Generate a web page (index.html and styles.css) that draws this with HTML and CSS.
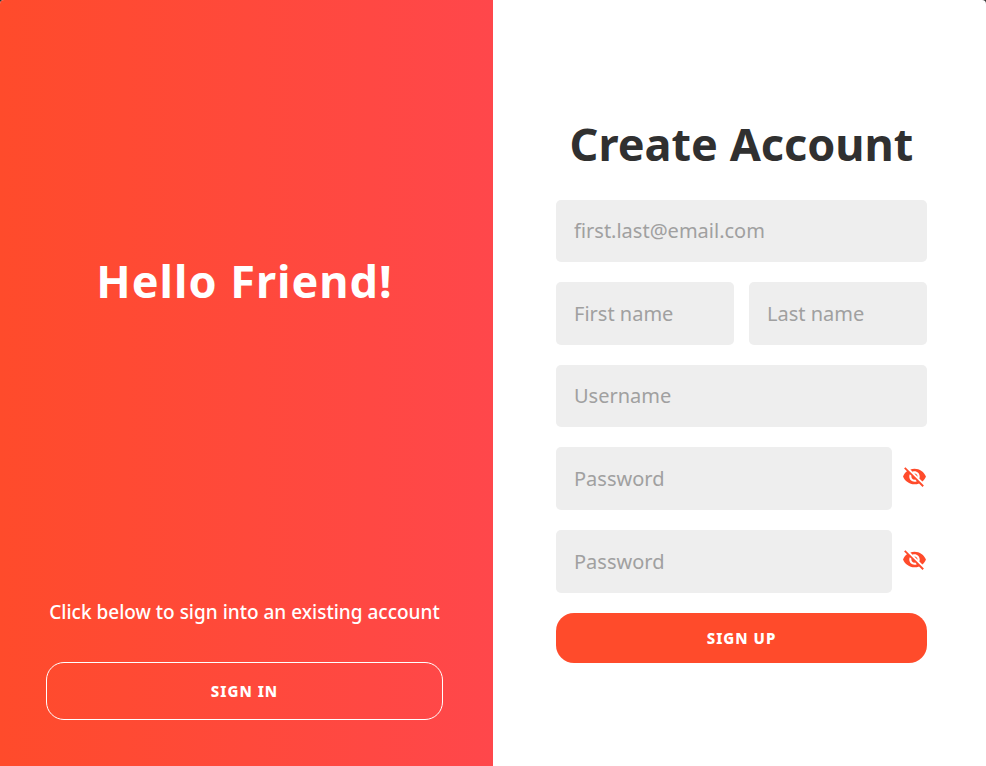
FILE: index.html
```html
<!DOCTYPE html>
<html lang="en">
<head>
<meta charset="utf-8">
<title>Create Account</title>
<link rel="stylesheet" href="styles.css">
</head>
<body>
<main class="card">
  <section class="welcome">
    <h1 class="title greeting">Hello Friend!</h1>
    <div class="signin">
      <p class="hint">Click below to sign into an existing account</p>
      <button class="button ghost" type="button">SIGN IN</button>
    </div>
  </section>
  <section class="register">
    <form class="form">
      <h1 class="title">Create Account</h1>
      <input class="field" type="email" aria-label="Email" placeholder="first.last@email.com">
      <div class="names">
        <input class="field" type="text" aria-label="First name" placeholder="First name">
        <input class="field" type="text" aria-label="Last name" placeholder="Last name">
      </div>
      <input class="field" type="text" aria-label="Username" placeholder="Username">
      <div class="secret">
        <input class="field" type="password" aria-label="Password" placeholder="Password">
        <button class="reveal" type="button" aria-label="Show password"><svg class="eye" viewBox="0 0 24 24"><path d="M12 7c2.76 0 5 2.24 5 5 0 .65-.13 1.26-.36 1.83l2.92 2.92c1.51-1.26 2.7-2.89 3.43-4.75-1.73-4.39-6-7.5-11-7.5-1.4 0-2.74.25-3.98.7l2.16 2.16C10.74 7.13 11.35 7 12 7zM2 4.27l2.28 2.28.46.46C3.08 8.3 1.78 10.02 1 12c1.73 4.39 6 7.5 11 7.5 1.55 0 3.03-.3 4.38-.84l.42.42L19.73 22 21 20.73 3.27 3 2 4.27zM7.53 9.8l1.55 1.55c-.05.21-.08.43-.08.65 0 1.66 1.34 3 3 3 .22 0 .44-.03.65-.08l1.55 1.55c-.67.33-1.41.53-2.2.53-2.76 0-5-2.24-5-5 0-.79.2-1.53.53-2.2zm4.31-.78l3.15 3.15.02-.16c0-1.66-1.34-3-3-3l-.17.01z"/></svg></button>
      </div>
      <div class="secret">
        <input class="field" type="password" aria-label="Confirm password" placeholder="Password">
        <button class="reveal" type="button" aria-label="Show password"><svg class="eye" viewBox="0 0 24 24"><path d="M12 7c2.76 0 5 2.24 5 5 0 .65-.13 1.26-.36 1.83l2.92 2.92c1.51-1.26 2.7-2.89 3.43-4.75-1.73-4.39-6-7.5-11-7.5-1.4 0-2.74.25-3.98.7l2.16 2.16C10.74 7.13 11.35 7 12 7zM2 4.27l2.28 2.28.46.46C3.08 8.3 1.78 10.02 1 12c1.73 4.39 6 7.5 11 7.5 1.55 0 3.03-.3 4.38-.84l.42.42L19.73 22 21 20.73 3.27 3 2 4.27zM7.53 9.8l1.55 1.55c-.05.21-.08.43-.08.65 0 1.66 1.34 3 3 3 .22 0 .44-.03.65-.08l1.55 1.55c-.67.33-1.41.53-2.2.53-2.76 0-5-2.24-5-5 0-.79.2-1.53.53-2.2zm4.31-.78l3.15 3.15.02-.16c0-1.66-1.34-3-3-3l-.17.01z"/></svg></button>
      </div>
      <button class="button primary" type="submit">SIGN UP</button>
    </form>
  </section>
</main>
</body>
</html>
```
FILE: styles.css
```css
* { box-sizing: border-box; }
body { margin: 0; background: #333; font-family: "Noto Sans", sans-serif; }
.card {
  display: grid;
  grid-template-columns: 1fr 1fr;
  min-height: 100vh;
  border-radius: 4px 4px 0 0;
  overflow: hidden;
  background: #fff;
}
.welcome {
  display: grid;
  grid-template-rows: 1fr auto;
  align-items: center;
  padding: 0 50px 46px 46px;
  background: linear-gradient(to right, #ff4b2b, #ff474b);
  color: #fff;
  text-align: center;
}
.title { margin: 0; font-size: 45px; line-height: 62px; font-weight: 700; color: #303030; text-align: center; }
.greeting { padding-bottom: 36px; color: #fff; letter-spacing: 1px; }
.hint { margin: 0 0 36px; font-size: 19px; line-height: 28px; font-weight: 500; }
.button {
  display: block;
  width: 100%;
  padding: 0;
  border: 0;
  border-radius: 18px;
  font: 800 15px/20px "Noto Sans", sans-serif;
  letter-spacing: 1px;
  color: #fff;
}
.ghost { height: 58px; border: 1px solid #fff; background: transparent; }
.primary { height: 50px; background: #ff4b2b; }
.register { display: flex; align-items: center; padding: 9px 59px 0 63px; }
.form { display: flex; flex-direction: column; gap: 20px; width: 100%; }
.form .title { margin-bottom: 5px; }
.field {
  width: 100%;
  min-width: 0;
  height: 62px;
  padding: 0 18px;
  border: 0;
  border-radius: 5px;
  background: #eee;
  font: 20px "Noto Sans", sans-serif;
  color: #333;
}
.field::placeholder { color: #a0a0a0; opacity: 1; }
.names { display: grid; grid-template-columns: 1fr 1fr; gap: 15px; }
.names .field, .secret .field { height: 63px; }
.secret { display: flex; align-items: center; gap: 10px; }
.reveal { flex: none; padding: 0 0 3px; border: 0; background: none; }
.eye { display: block; width: 25px; height: 25px; fill: #ff4b2b; }
```
